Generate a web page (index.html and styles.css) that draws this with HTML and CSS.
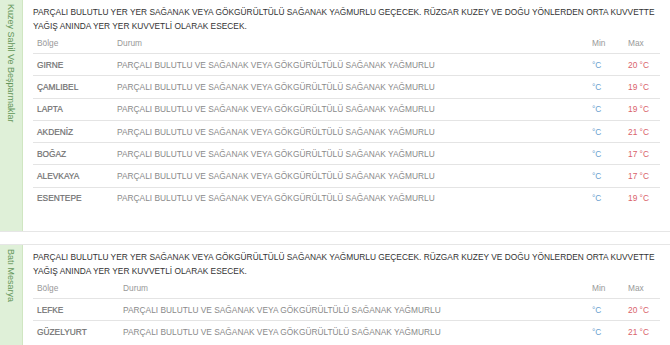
FILE: index.html
```html
<!DOCTYPE html>
<html lang="tr">
<head>
<meta charset="utf-8">
<title>Hava Durumu</title>
<link rel="stylesheet" href="styles.css">
</head>
<body>
<section class="block">
  <div class="side"><span class="side-label">Kuzey Sahil Ve Beşparmaklar</span></div>
  <div class="content">
    <p class="summary">PARÇALI BULUTLU YER YER SAĞANAK VEYA GÖKGÜRÜLTÜLÜ SAĞANAK YAĞMURLU GEÇECEK. RÜZGAR KUZEY VE DOĞU YÖNLERDEN ORTA KUVVETTE YAĞIŞ ANINDA YER YER KUVVETLİ OLARAK ESECEK.</p>
    <table class="wx">
      <thead>
        <tr><th class="c-region">Bölge</th><th>Durum</th><th class="c-min">Min</th><th class="c-max">Max</th></tr>
      </thead>
      <tbody>
        <tr><td class="region">GIRNE</td><td class="cond">PARÇALI BULUTLU VE SAĞANAK VEYA GÖKGÜRÜLTÜLÜ SAĞANAK YAĞMURLU</td><td class="min">°C</td><td class="max">20 °C</td></tr>
        <tr><td class="region">ÇAMLIBEL</td><td class="cond">PARÇALI BULUTLU VE SAĞANAK VEYA GÖKGÜRÜLTÜLÜ SAĞANAK YAĞMURLU</td><td class="min">°C</td><td class="max">19 °C</td></tr>
        <tr><td class="region">LAPTA</td><td class="cond">PARÇALI BULUTLU VE SAĞANAK VEYA GÖKGÜRÜLTÜLÜ SAĞANAK YAĞMURLU</td><td class="min">°C</td><td class="max">19 °C</td></tr>
        <tr><td class="region">AKDENİZ</td><td class="cond">PARÇALI BULUTLU VE SAĞANAK VEYA GÖKGÜRÜLTÜLÜ SAĞANAK YAĞMURLU</td><td class="min">°C</td><td class="max">21 °C</td></tr>
        <tr><td class="region">BOĞAZ</td><td class="cond">PARÇALI BULUTLU VE SAĞANAK VEYA GÖKGÜRÜLTÜLÜ SAĞANAK YAĞMURLU</td><td class="min">°C</td><td class="max">17 °C</td></tr>
        <tr><td class="region">ALEVKAYA</td><td class="cond">PARÇALI BULUTLU VE SAĞANAK VEYA GÖKGÜRÜLTÜLÜ SAĞANAK YAĞMURLU</td><td class="min">°C</td><td class="max">17 °C</td></tr>
        <tr><td class="region">ESENTEPE</td><td class="cond">PARÇALI BULUTLU VE SAĞANAK VEYA GÖKGÜRÜLTÜLÜ SAĞANAK YAĞMURLU</td><td class="min">°C</td><td class="max">19 °C</td></tr>
      </tbody>
    </table>
  </div>
</section>
<section class="block">
  <div class="side"><span class="side-label">Batı Mesarya</span></div>
  <div class="content">
    <p class="summary">PARÇALI BULUTLU YER YER SAĞANAK VEYA GÖKGÜRÜLTÜLÜ SAĞANAK YAĞMURLU GEÇECEK. RÜZGAR KUZEY VE DOĞU YÖNLERDEN ORTA KUVVETTE YAĞIŞ ANINDA YER YER KUVVETLİ OLARAK ESECEK.</p>
    <table class="wx wx-wide">
      <thead>
        <tr><th class="c-region">Bölge</th><th>Durum</th><th class="c-min">Min</th><th class="c-max">Max</th></tr>
      </thead>
      <tbody>
        <tr><td class="region">LEFKE</td><td class="cond">PARÇALI BULUTLU VE SAĞANAK VEYA GÖKGÜRÜLTÜLÜ SAĞANAK YAĞMURLU</td><td class="min">°C</td><td class="max">20 °C</td></tr>
        <tr><td class="region">GÜZELYURT</td><td class="cond">PARÇALI BULUTLU VE SAĞANAK VEYA GÖKGÜRÜLTÜLÜ SAĞANAK YAĞMURLU</td><td class="min">°C</td><td class="max">21 °C</td></tr>
      </tbody>
    </table>
  </div>
</section>
</body>
</html>
```

FILE: styles.css
```css
html, body {
  margin: 0;
  padding: 0;
  background: #ffffff;
}
body {
  font-family: "Liberation Sans", Arial, sans-serif;
  font-size: 8.35px;
  color: #333333;
}
.block {
  display: flex;
  border-top: 1px solid #e6e6e6;
  border-bottom: 1px solid #e6e6e6;
  margin-bottom: 12px;
}
.block:first-child {
  border-top: none;
}
.side {
  width: 22px;
  flex: none;
  background: #dff0d8;
  border-right: 1px solid #d0e6c2;
  display: flex;
  justify-content: center;
  padding-top: 4px;
}
.side-label {
  writing-mode: vertical-rl;
  color: #64965a;
  font-size: 9px;
  line-height: 22px;
  white-space: nowrap;
}
.content {
  flex: 1;
  padding: 5px 10px 22px 10px;
}
.summary {
  margin: 0;
  line-height: 14px;
  color: #333333;
}
.wx {
  width: 100%;
  border-collapse: collapse;
}
.wx th {
  text-align: left;
  font-weight: normal;
  color: #999999;
  height: 20px;
  padding: 0 4px;
  border-bottom: 1px solid #e4e4e4;
}
.wx td {
  height: 21.3px;
  padding: 0 4px;
  border-bottom: 1px solid #e4e4e4;
  white-space: nowrap;
}
.wx tbody tr:last-child td {
  border-bottom: none;
}
.wx .region,
.wx .c-region {
  width: 72px;
}
.wx-wide .region,
.wx-wide .c-region {
  width: 78px;
}
.wx .region {
  color: #707070;
  -webkit-text-stroke: 0.2px #707070;
}
.wx .cond {
  color: #8a8a8a;
}
.wx .c-min, .wx .min,
.wx .c-max, .wx .max {
  width: 28px;
}
.wx .min {
  color: #6a9fcf;
}
.wx .max {
  color: #d9626a;
}
```
